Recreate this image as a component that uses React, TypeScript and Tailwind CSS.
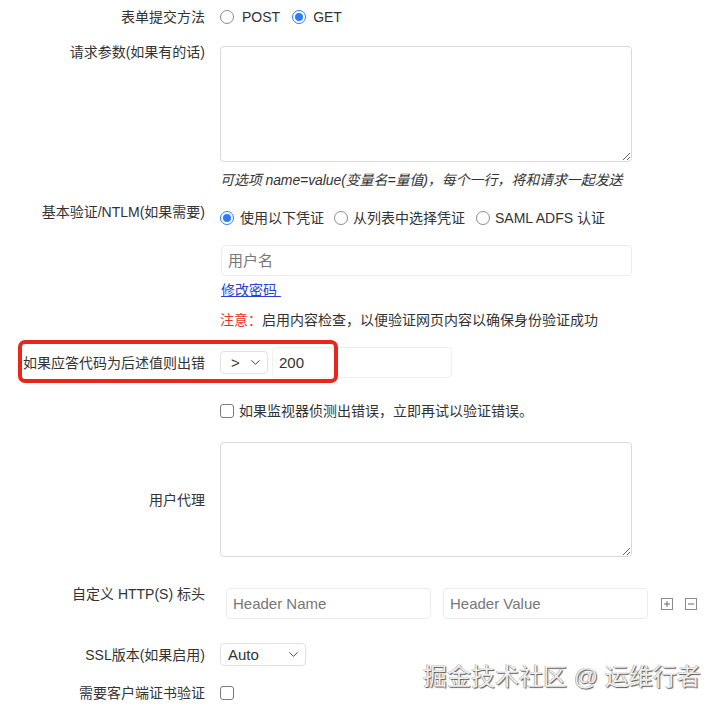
import React from 'react';
import { ChevronDown } from 'lucide-react';

const Row: React.FC<{ label: React.ReactNode; className?: string; labelClass?: string; children?: React.ReactNode }> = ({
  label,
  className = '',
  labelClass = '',
  children,
}) => (
  <div className={`flex ${className}`}>
    <div className={`w-[205px] shrink-0 text-right whitespace-nowrap ${labelClass}`}>{label}</div>
    <div className="ml-[15px] flex-1">{children}</div>
  </div>
);

const Radio: React.FC<{ checked?: boolean }> = ({ checked }) =>
  checked ? (
    <span className="w-[14px] h-[14px] rounded-full border-[1.5px] border-[#2f7df6] flex items-center justify-center shrink-0">
      <span className="w-[8px] h-[8px] rounded-full bg-[#2f7df6]" />
    </span>
  ) : (
    <span className="w-[14px] h-[14px] rounded-full border border-[#8c8c8c] bg-white shrink-0" />
  );

const Checkbox: React.FC = () => (
  <span className="w-[14px] h-[14px] rounded-[3px] border border-[#7a7a7a] bg-white shrink-0" />
);

const BoxIcon: React.FC<{ plus?: boolean }> = ({ plus }) => (
  <svg width="12" height="12" viewBox="0 0 12 12" className="shrink-0">
    <rect x="0.5" y="0.5" width="11" height="11" fill="none" stroke="#8a8a8a" />
    <line x1="3" y1="6" x2="9" y2="6" stroke="#6a6a6a" />
    {plus && <line x1="6" y1="3" x2="6" y2="9" stroke="#6a6a6a" />}
  </svg>
);

export default function App() {
  return (
    <div className="relative w-[720px] h-[712px] bg-white text-[#333] text-[14px] leading-[20px] font-['Liberation_Sans','Noto_Sans_CJK_SC',sans-serif] overflow-hidden">
      <div className="flex flex-col pt-[7px]">
        {/* form method */}
        <Row label="表单提交方法">
          <div className="flex items-center h-[20px]">
            <Radio />
            <span className="ml-[8px]">POST</span>
            <span className="ml-[12px]" />
            <Radio checked />
            <span className="ml-[7px]">GET</span>
          </div>
        </Row>

        {/* params */}
        <Row label="请求参数(如果有的话)" className="mt-[15px]">
          <textarea className="block mt-[4px] w-[412px] h-[116px] border border-[#d9d9d9] rounded-[4px] bg-white" />
          <div className="mt-[8px] italic whitespace-nowrap tracking-[-0.1px]">可选项 name=value(变量名=量值)，每个一行，将和请求一起发送</div>
        </Row>

        {/* basic auth */}
        <Row label="基本验证/NTLM(如果需要)" className="mt-[12px]">
          <div className="pt-[6px] flex items-center h-[26px]">
            <Radio checked />
            <span className="ml-[6px]">使用以下凭证</span>
            <span className="ml-[10px]" />
            <Radio />
            <span className="ml-[5px]">从列表中选择凭证</span>
            <span className="ml-[11px]" />
            <Radio />
            <span className="ml-[5px]">SAML ADFS 认证</span>
          </div>
          <div className="mt-[17px] ml-[1px] w-[411px] h-[31px] border border-[#ececec] rounded-[4px] flex items-center px-[6px] text-[15px] text-[#777]">
            用户名
          </div>
          <div className="mt-[4px] ml-[1px]">
            <span className="text-[#2b40d8] underline whitespace-pre">修改密码 </span>
          </div>
          <div className="mt-[10px]">
            <span className="text-[#e5322a]">注意：</span>启用内容检查，以便验证网页内容以确保身份验证成功
          </div>
        </Row>

        {/* response code */}
        <div className="relative mt-[17px]">
          <Row label="如果应答代码为后述值则出错" className="items-center h-[31px]">
            <div className="flex items-center">
              <div className="w-[48px] h-[23px] border border-[#e2e2e2] rounded-[4px] flex items-center justify-between pl-[10px] pr-[4px] text-[15px]">
                <span>&gt;</span>
                <ChevronDown size={15} strokeWidth={1.6} className="text-[#444]" />
              </div>
              <div className="ml-[4px] w-[180px] h-[31px] border border-[#f0f0f0] rounded-[4px] flex items-center px-[6px] text-[15px]">200</div>
            </div>
          </Row>
          <div className="absolute -top-[7px] left-[18px] w-[320px] h-[43px] border-[4px] border-[#e8261b] rounded-[7px]" />
        </div>

        {/* retry */}
        <Row label="" className="mt-[23px]">
          <div className="flex items-center h-[20px]">
            <Checkbox />
            <span className="ml-[5px]">如果监视器侦测出错误，立即再试以验证错误。</span>
          </div>
        </Row>

        {/* user agent */}
        <Row label="用户代理" className="mt-[21px] items-center">
          <textarea className="block w-[412px] h-[115px] border border-[#d9d9d9] rounded-[4px] bg-white" />
        </Row>

        {/* headers */}
        <Row label="自定义 HTTP(S) 标头" className="mt-[31px] items-start" labelClass="-mt-[4px]">
          <div className="flex items-center">
            <div className="ml-[6px] w-[205px] h-[31px] border border-[#ececec] rounded-[4px] flex items-center px-[6px] text-[15px] text-[#777]">
              Header Name
            </div>
            <div className="ml-[12px] w-[205px] h-[31px] border border-[#ececec] rounded-[4px] flex items-center px-[6px] text-[15px] text-[#777]">
              Header Value
            </div>
            <div className="ml-[13px] flex items-center gap-[12px]">
              <BoxIcon plus />
              <BoxIcon />
            </div>
          </div>
        </Row>

        {/* ssl */}
        <Row label="SSL版本(如果启用)" className="mt-[24px] items-center">
          <div className="w-[86px] h-[23px] border border-[#e2e2e2] rounded-[4px] flex items-center justify-between pl-[7px] pr-[4px] text-[15px]">
            <span>Auto</span>
            <ChevronDown size={15} strokeWidth={1.6} className="text-[#444]" />
          </div>
        </Row>

        {/* client cert */}
        <Row label="需要客户端证书验证" className="mt-[17px] items-center">
          <div className="flex items-center h-[20px]">
            <Checkbox />
          </div>
        </Row>
      </div>

      {/* watermark */}
      <div className="absolute left-[423px] top-[662px] whitespace-nowrap text-[24px] leading-[30px] text-[#eeeeee] [text-shadow:1px_1px_1px_#555,-0.5px_-0.5px_0_#999]">
        掘金技术社区 @ 运维行者
      </div>
    </div>
  );
}
